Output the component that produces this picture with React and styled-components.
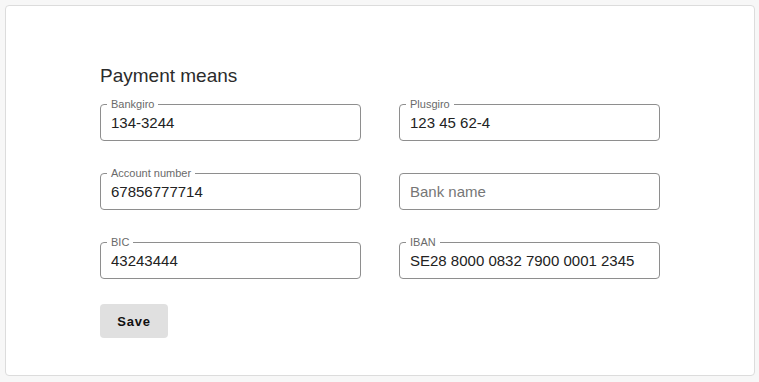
import React from "react";
import styled, { createGlobalStyle } from "styled-components";

const Global = createGlobalStyle`
  html, body { margin: 0; padding: 0; background: #f7f7f7; }
  body { font-family: "Liberation Sans", Arial, sans-serif; }
  * { box-sizing: border-box; }
`;

const Page = styled.div`
  padding: 5px;
  width: 759px;
  height: 382px;
`;

const Card = styled.section`
  width: 750px;
  height: 371px;
  background: #fff;
  border: 1px solid #dcdcdc;
  border-radius: 4px;
  padding: 57px 94px 0;
`;

const Title = styled.h2`
  margin: 0 0 16px;
  font-size: 19px;
  line-height: 25px;
  font-weight: 400;
  color: #2b2b2b;
`;

const Grid = styled.div`
  display: grid;
  grid-template-columns: 261px 261px;
  column-gap: 38px;
  row-gap: 32px;
`;

const Field = styled.div`
  position: relative;
  height: 37px;
  border: 1px solid #8e8e8e;
  border-radius: 4px;
  display: flex;
`;

const Label = styled.span`
  position: absolute;
  left: 6px;
  top: -7px;
  padding: 0 4px;
  background: #fff;
  font-size: 11px;
  line-height: 12px;
  color: #6a6a6a;
`;

const Input = styled.input`
  flex: 1;
  min-width: 0;
  border: none;
  outline: none;
  background: transparent;
  font-family: "Liberation Sans", Arial, sans-serif;
  font-size: 15px;
  line-height: 18px;
  height: 35px;
  color: #222;
  padding: 8px 10px 9px;
  &::placeholder { color: #767676; opacity: 1; }
`;

const SaveButton = styled.button`
  margin-top: 25px;
  width: 68px;
  height: 34px;
  border: none;
  border-radius: 4px;
  background: #e0e0e0;
  font-family: "Liberation Sans", Arial, sans-serif;
  font-weight: 700;
  font-size: 13px;
  letter-spacing: 0.8px;
  color: #111;
  padding: 0;
  cursor: pointer;
`;

const fields = [
  { label: "Bankgiro", value: "134-3244" },
  { label: "Plusgiro", value: "123 45 62-4" },
  { label: "Account number", value: "67856777714" },
  { placeholder: "Bank name", value: "" },
  { label: "BIC", value: "43243444" },
  { label: "IBAN", value: "SE28 8000 0832 7900 0001 2345" },
];

function TextField({ label, value, placeholder }) {
  const filled = Boolean(value);
  return (
    <Field>
      {filled && label && <Label>{label}</Label>}
      <Input defaultValue={value} placeholder={placeholder || label} />
    </Field>
  );
}

export default function App() {
  return (
    <>
      <Global />
      <Page>
        <Card>
          <Title>Payment means</Title>
          <Grid>
            {fields.map((f, i) => (
              <TextField key={i} {...f} />
            ))}
          </Grid>
          <SaveButton>Save</SaveButton>
        </Card>
      </Page>
    </>
  );
}
